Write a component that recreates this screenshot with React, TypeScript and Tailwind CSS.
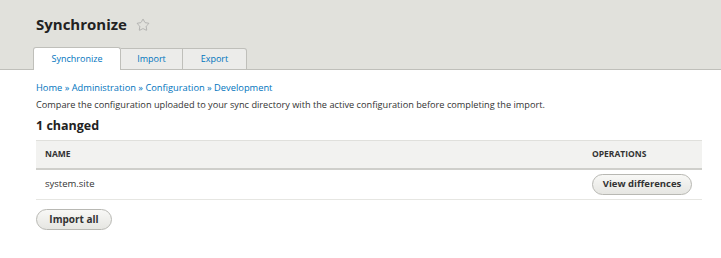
import { Star } from "lucide-react";

export default function App() {
  return (
    <main className="w-[721px] h-[258px] bg-white text-[#333] font-['Open_Sans',sans-serif] overflow-hidden">
      {/* header */}
      <div className="h-[70px] bg-[#e1e1dc] border-b border-[#bfbfba] pl-[33px] flex flex-col">
        <div className="flex items-center gap-[9px] pt-[10px] pl-[3px] h-[38px]">
          <h1 className="text-[15px] font-bold text-[#222] leading-none">Synchronize</h1>
          <Star size={14} strokeWidth={1.1} className="text-[#999] mt-[1px]" />
        </div>
        <div className="flex items-end mt-auto -mb-px">
          <div className="w-[88px] h-[23px] bg-white border border-b-0 border-[#bfbfba] rounded-t-[3px] flex items-center justify-center text-[9px] text-[#0074bd]">
            Synchronize
          </div>
          <div className="w-[62px] h-[22px] bg-[#ececea] border border-l-0 border-[#bfbfba] flex items-center justify-center text-[9px] text-[#0074bd]">
            Import
          </div>
          <div className="w-[64px] h-[22px] bg-[#ececea] border border-l-0 border-[#bfbfba] rounded-tr-[3px] flex items-center justify-center text-[9px] text-[#0074bd]">
            Export
          </div>
        </div>
      </div>

      {/* content */}
      <div className="pl-[36px] pr-[19px]">
        <div className="pt-[11px] text-[9.3px] text-[#0074bd] leading-[14px]">
          Home » Administration » Configuration » Development
        </div>
        <p className="mt-[3px] text-[9.2px] leading-[14px]">
          Compare the configuration uploaded to your sync directory with the active configuration before completing the import.
        </p>
        <h2 className="mt-[6px] text-[12.5px] font-bold leading-[16px] text-[#222]">1 changed</h2>

        <table className="mt-[6px] w-full border-collapse text-[9.5px]">
          <thead>
            <tr className="h-[28px] bg-[#f2f2f0] border-t border-[#e0e0dc] border-b-2 border-b-[#cfcfcb]">
              <th className="text-left font-bold pl-[9px] text-[8.5px] text-[#333]">NAME</th>
              <th className="text-left font-bold pl-[0px] w-[110px] text-[8.5px] text-[#333]">OPERATIONS</th>
            </tr>
          </thead>
          <tbody>
            <tr className="h-[31px] border-b border-[#e6e6e2]">
              <td className="pl-[9px]">system.site</td>
              <td>
                <button className="w-[100px] h-[21px] rounded-full border border-[#b8b8b3] bg-gradient-to-b from-[#f8f8f6] to-[#e6e6e2] font-bold text-[9.5px] text-[#333]">
                  View differences
                </button>
              </td>
            </tr>
          </tbody>
        </table>

        <button className="mt-[9px] w-[76px] h-[21px] rounded-full border border-[#b8b8b3] bg-gradient-to-b from-[#f8f8f6] to-[#e6e6e2] font-bold text-[10px] text-[#333]">
          Import all
        </button>
      </div>
    </main>
  );
}
